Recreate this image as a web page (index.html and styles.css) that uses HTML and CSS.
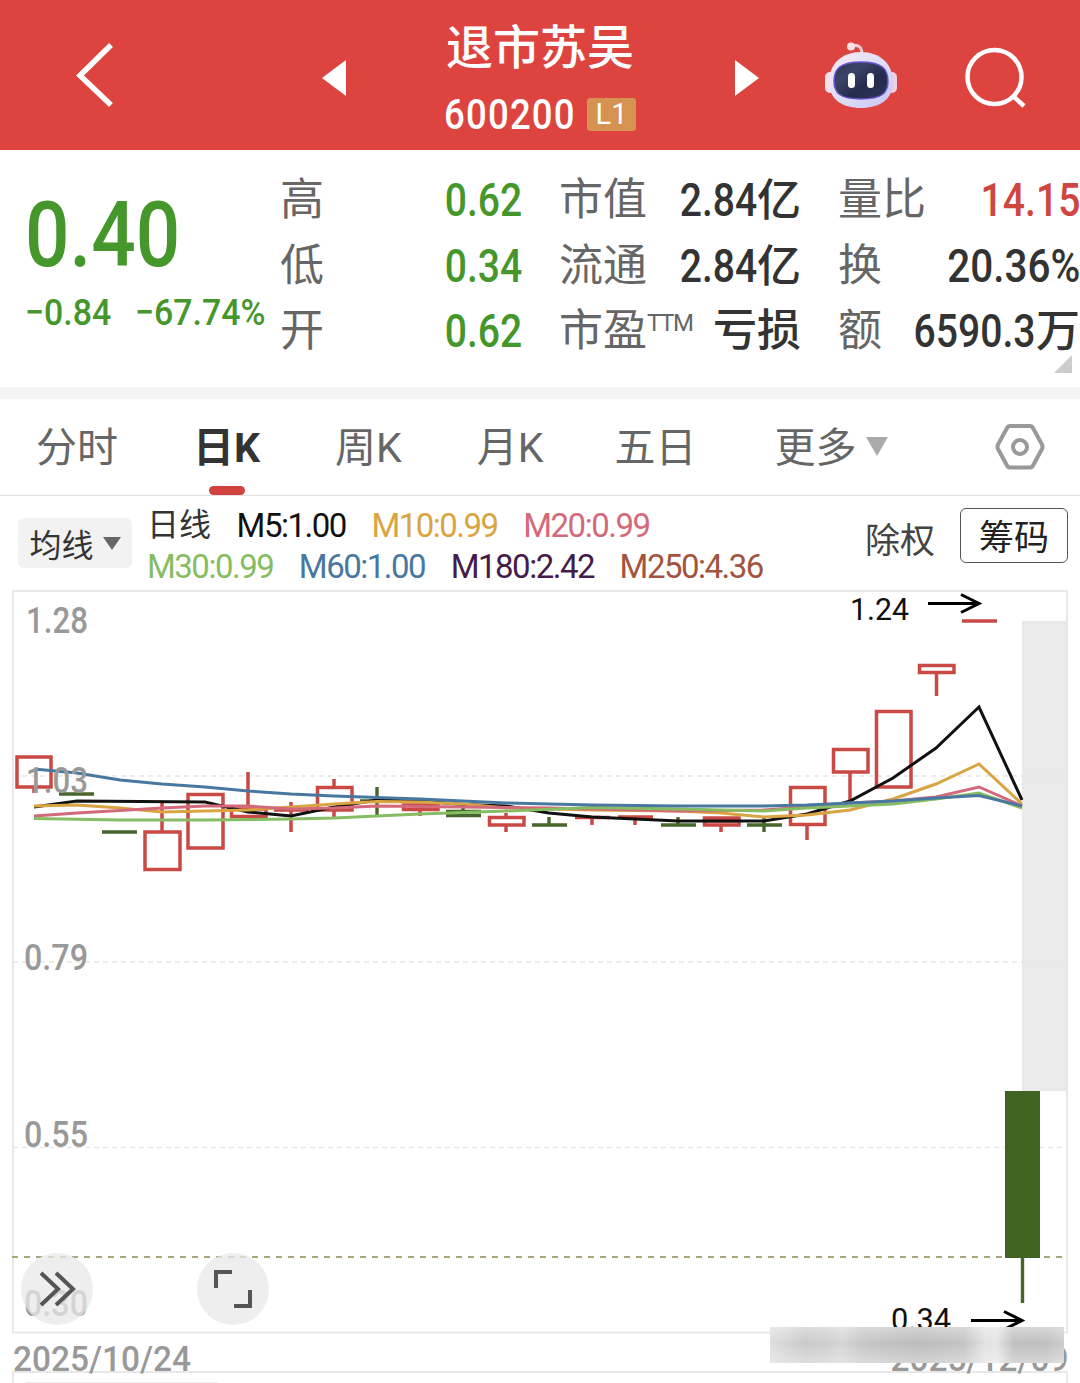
FILE: index.html
```
<!DOCTYPE html>
<html lang="zh-CN">
<head>
    <meta charset="UTF-8">
    <meta name="viewport" content="width=device-width, initial-scale=1.0">
    <title>退市苏吴 600200</title>
    <link rel="stylesheet" href="styles.css">
</head>
<body>
    <!-- Header -->
    <header class="header">
        <svg class="back" width="40" height="68" viewBox="75 41 40 68"><path d="M111 45L80 75.500L111 105" fill="none" stroke="#fff" stroke-width="5.500"/></svg>
        <svg class="prev" width="24" height="38" viewBox="0 0 24 38"><path d="M0 19L24 1V37Z" fill="#fff"/></svg>
        <div class="title">
            <h1>退市苏吴</h1>
            <div class="code"><span>600200</span><em>L1</em></div>
        </div>
        <svg class="next" width="24" height="38" viewBox="0 0 24 38"><path d="M24 19L0 1V37Z" fill="#fff"/></svg>
        <svg class="robot" width="76" height="70" viewBox="823 40 76 70">
            <defs>
                <linearGradient id="shell" x1="0" y1="0" x2="1" y2="1">
                    <stop offset="0" stop-color="#fbe9f0"/>
                    <stop offset="0.55" stop-color="#dcdcf8"/>
                    <stop offset="1" stop-color="#c9c4f2"/>
                </linearGradient>
                <linearGradient id="visor" x1="0" y1="0" x2="1" y2="1">
                    <stop offset="0" stop-color="#2c3356"/>
                    <stop offset="0.3" stop-color="#3b4566"/>
                    <stop offset="0.6" stop-color="#252b4c"/>
                    <stop offset="1" stop-color="#2c3458"/>
                </linearGradient>
            </defs>
            <path d="M852 46C858 44 862 47 862 54" fill="none" stroke="#f7cfd6" stroke-width="3"/>
            <circle cx="851" cy="46.500" r="4" fill="#fbe0e4"/>
            <rect x="825" y="72" width="10" height="21" rx="5" fill="#f6dfec"/>
            <rect x="887" y="72" width="10" height="21" rx="5" fill="#f0cfe4"/>
            <path d="M861 52C880 52 893 64 893 82C893 99 880 108 861 108C842 108 829 99 829 82C829 64 842 52 861 52Z" fill="url(#shell)"/>
            <path d="M861 62C882 62 888 69 888 81C888 93 882 99 861 99C840 99 834 93 834 81C834 69 840 62 861 62Z" fill="url(#visor)" stroke="#6a55cf" stroke-width="1.500"/>
            <rect x="848" y="73" width="7" height="15" rx="3.500" fill="#fff"/>
            <rect x="867" y="73" width="7" height="15" rx="3.500" fill="#fff"/>
        </svg>
        <svg class="search" width="64" height="64" viewBox="964 46 64 64"><circle cx="994.500" cy="77" r="27" fill="none" stroke="#fff" stroke-width="4.500"/><path d="M1013 96L1024 106" stroke="#fff" stroke-width="4.500"/></svg>
    </header>

    <!-- Quote -->
    <section class="quote">
        <div class="price">
            <div class="last">0.40</div>
            <div class="change"><span>−0.84</span><span>−67.74%</span></div>
        </div>
        <dl class="col col1">
            <div><dt>高</dt><dd class="green"><i>0.62</i></dd></div>
            <div><dt>低</dt><dd class="green"><i>0.34</i></dd></div>
            <div><dt>开</dt><dd class="green"><i>0.62</i></dd></div>
        </dl>
        <dl class="col col2">
            <div><dt>市值</dt><dd><i>2.84</i>亿</dd></div>
            <div><dt>流通</dt><dd><i>2.84</i>亿</dd></div>
            <div><dt>市盈<sup>TTM</sup></dt><dd>亏损</dd></div>
        </dl>
        <dl class="col col3">
            <div><dt>量比</dt><dd class="red"><i>14.15</i></dd></div>
            <div><dt>换</dt><dd><i class="wide">20.36%</i></dd></div>
            <div><dt>额</dt><dd><i>6590.3</i>万</dd></div>
        </dl>
        <span class="corner"></span>
    </section>

    <!-- Period tabs -->
    <nav class="tabs">
        <a>分时</a>
        <a class="active">日K</a>
        <a>周K</a>
        <a>月K</a>
        <a class="five">五日</a>
        <a class="more">更多<svg width="22" height="19" viewBox="0 0 22 19"><path d="M0 0H22L11 19Z" fill="#aaa"/></svg></a>
        <svg class="settings" width="50" height="48" viewBox="0 0 50 48">
            <path d="M15 3H35Q37 3 38 5L47 21.500Q48 24 47 26L38 42.500Q37 44.500 35 44.500H15Q13 44.500 12 42.500L3 26Q2 24 3 21.500L12 5Q13 3 15 3Z" fill="none" stroke="#999" stroke-width="4"/>
            <circle cx="25" cy="24" r="7" fill="none" stroke="#999" stroke-width="4"/>
        </svg>
    </nav>

    <!-- Moving averages -->
    <section class="averages">
        <button class="pick">均线<svg width="18" height="13" viewBox="0 0 18 13"><path d="M0 0H18L9 13Z" fill="#666"/></svg></button>
        <div class="legend">
            <div><b>日线</b><span class="m5">M5:1.00</span><span class="m10">M10:0.99</span><span class="m20">M20:0.99</span></div>
            <div><span class="m30">M30:0.99</span><span class="m60">M60:1.00</span><span class="m180">M180:2.42</span><span class="m250">M250:4.36</span></div>
        </div>
        <span class="rights">除权</span>
        <button class="chips">筹码</button>
    </section>

    <!-- Chart -->
    <section class="chart">
        <svg width="1080" height="744" viewBox="0 590 1080 744">
            <rect x="1022" y="621" width="45" height="470" fill="#eaeaea"/>
            <g class="grid">
                <path d="M13 776H1067M13 962H1067M13 1147.500H1067"/>
            </g>
            <rect class="frame" x="13" y="591" width="1054" height="741.500"/>
            <path class="now" d="M12 1257H1067"/>

            <g class="up">
                <path d="M17 757H51V787H17ZM34 787V793"/>
                <path d="M162 803V832M145 832H180V869.500H145Z"/>
                <path d="M188 794.500H223V848H188Z"/>
                <path d="M248 772V807M231.500 809H266V816.500H231.500Z"/>
                <path d="M291 802V832M274 810H309"/>
                <path d="M334 779V787M317.500 787.500H352V810H317.500ZM334 810V817"/>
                <path d="M403.500 805H438V809.500H403.500ZM420 810V816"/>
                <path d="M506 813V817M489.500 817.500H524V825H489.500ZM506 825V832"/>
                <path d="M575 817.500H610M592 817V825"/>
                <path d="M618 817H653M635 817V825"/>
                <path d="M704.500 818H739V825H704.500ZM704 821H739M721 825V832"/>
                <path d="M790.500 787.500H825V824.500H790.500ZM807 825V840"/>
                <path d="M833.500 749.500H868V772H833.500ZM850 772V801"/>
                <path d="M876.500 711.500H911V787H876.500Z"/>
                <path d="M919.500 665.500H954V672.500H919.500ZM936.500 673V696"/>
                <path d="M962 621H997"/>
            </g>
            <g class="down">
                <path d="M59 794H94M102 832H137"/>
                <path d="M377 787V815M360 801H395"/>
                <path d="M446 811.500H481M446 815.500H481M463 808V816"/>
                <path d="M532 825H567M549 817V825M661 825H696M678 817V825M747 825H782M764 818V832"/>
                <rect x="1005" y="1091" width="35" height="167" fill="#3f6422"/>
                <path d="M1022.500 1257V1303"/>
            </g>

            <g class="lines">
                <polyline class="m5" points="34,807 77,801 205,802 248,812 291,816 334,807 377,800 420,801 463,804.500 506,806 549,813 592,817 635,819 678,821 764,821 807,814 850,801 893,778 936,748 979,707 1022,800"/>
                <polyline class="m10" points="34,806 77,805 120,808 162,812 205,811 248,810 291,807 334,804 377,801.500 420,802 463,804 506,808 592,810 678,811 721,813 764,817 807,815 850,810 893,799 936,784 979,764 1022,804"/>
                <polyline class="m20" points="34,816 77,813 120,810.500 162,808 205,806 248,806 291,809 334,808 377,806 463,807 549,808 635,810 678,811 764,810 807,807 850,803 893,801 936,797 979,787 1022,806"/>
                <polyline class="m30" points="34,818.500 120,820 205,820 291,819 334,818 420,814 506,811 592,807.500 678,809 764,811 807,808 850,806 893,804 936,799 979,793 1022,808"/>
                <polyline class="m60" points="34,769 77,773 120,780 162,784 205,787 248,791 291,794 334,796 420,799 506,803 592,805 678,806 764,806 807,805 850,803 893,801 936,798 979,795.500 1022,806"/>
            </g>

            <text class="axis" x="26" y="633" textLength="62" lengthAdjust="spacingAndGlyphs">1.28</text>
            <text class="axis" x="26" y="793" textLength="62" lengthAdjust="spacingAndGlyphs">1.03</text>
            <text class="axis" x="24" y="970" textLength="64" lengthAdjust="spacingAndGlyphs">0.79</text>
            <text class="axis" x="24" y="1147" textLength="64" lengthAdjust="spacingAndGlyphs">0.55</text>
            <text class="axis" x="24" y="1316" textLength="64" lengthAdjust="spacingAndGlyphs">0.30</text>

            <text class="mark" x="850" y="620" textLength="59" lengthAdjust="spacingAndGlyphs">1.24</text>
            <path class="arrow" d="M928 603.500H979M961 594.500L979 603.500L961 612.500"/>
            <text class="mark" x="891" y="1330" textLength="60" lengthAdjust="spacingAndGlyphs">0.34</text>
            <path class="arrow" d="M971 1320.500H1022M1004 1311.500L1022 1320.500L1004 1329.500"/>
        </svg>
        <button class="round expand"><svg width="36" height="36" viewBox="0 0 36 36"><path d="M2 2L19 18L2 34M17 2L34 18L17 34"/></svg></button>
        <button class="round full"><svg width="38" height="38" viewBox="0 0 38 38"><path d="M2 18V2H18M20 36H36V20"/></svg></button>
        <div class="blurred"></div>
    </section>

    <div class="dates"><span>2025/10/24</span><span>2025/12/09</span></div>
    <section class="volume"><div></div></section>
</body>
</html>
```
FILE: styles.css
```
* {
    box-sizing: border-box;
}
body {
    margin: 0;
    width: 1080px;
    height: 1383px;
    overflow: hidden;
    background: #fff;
    color: #333;
    font-family: Roboto, "Noto Sans CJK SC", sans-serif;
}
svg {
    display: block;
    flex-shrink: 0;
    overflow: visible;
}
button {
    font-family: inherit;
    padding: 0;
    border: 0;
}

/* header */
.header {
    display: flex;
    align-items: center;
    height: 150px;
    background: #dd4440;
    color: #fff;
}
.back { margin-left: 75px; }
.prev { margin: 5px 0 0 207px; }
.title {
    width: 240px;
    margin: 0 75px 0 74px;
    height: 150px;
    padding-top: 18px;
    text-align: center;
}
.title h1 {
    margin: 0;
    font-size: 47px;
    line-height: 60px;
    font-weight: 500;
}
.code {
    display: flex;
    justify-content: center;
    align-items: center;
    gap: 12px;
    height: 72px;
}
.code span {
    width: 131px;
    font-size: 43px;
    font-weight: 500;
    letter-spacing: 1.4px;
    transform: scaleX(0.85);
    transform-origin: left;
}
.code em {
    width: 49px;
    height: 33px;
    border-radius: 3px;
    background: #d69250;
    font-size: 29px;
    line-height: 33px;
    font-style: normal;
}
.next { margin-top: 5px; }
.robot { margin-left: 64px; }
.search { margin: 6px 0 0 65px; }

/* quote */
.quote {
    position: relative;
    display: flex;
    height: 249px;
    padding-top: 17px;
    border-bottom: 12px solid #f4f4f4;
}
.price {
    width: 280px;
    padding-left: 25px;
    color: #45962b;
    font-weight: 500;
}
.last {
    margin-top: 15px;
    font-size: 90px;
    line-height: 108px;
    transform: scaleX(0.87);
    transform-origin: left;
}
.change {
    display: flex;
    white-space: nowrap;
    font-size: 37px;
    line-height: 46px;
}
.change span {
    width: 110px;
    transform: scaleX(0.915);
    transform-origin: left;
}
.col {
    margin: 0;
    font-size: 44px;
}
.col div {
    display: flex;
    justify-content: space-between;
    height: 65.5px;
    line-height: 66.5px;
    white-space: nowrap;
}
.col1 { width: 242px; }
.col2 { width: 242px; margin-left: 37px; }
.col3 { width: 242px; margin-left: 37px; }
dt {
    color: #666;
}
dt sup {
    font-size: 24px;
    line-height: 0;
    vertical-align: 15px;
    letter-spacing: -1.4px;
}
dd {
    margin: 0;
    font-weight: 500;
}
dd i {
    display: inline-block;
    font-size: 46px;
    font-style: normal;
    transform: scaleX(0.85);
    transform-origin: right;
}
dd .wide { transform: scaleX(0.88); }
.green { color: #45962b; }
.red { color: #cf4641; }
.corner {
    position: absolute;
    right: 8px;
    bottom: 14px;
    border-left: 18px solid transparent;
    border-bottom: 18px solid #ccc;
}

/* tabs */
.tabs {
    display: flex;
    align-items: center;
    gap: 75px;
    height: 97px;
    padding-left: 36px;
    border-bottom: 1px solid #e0e0e0;
    font-size: 41px;
    color: #666;
}
.tabs a {
    margin-top: -6px;
}
.tabs .active {
    position: relative;
    color: #333;
    font-weight: 700;
}
.active::after {
    content: "";
    position: absolute;
    left: 16px;
    bottom: -21px;
    width: 36px;
    height: 9px;
    border-radius: 5px;
    background: #d0433f;
}
.tabs .five {
    margin-left: -4px;
}
.more {
    display: flex;
    align-items: center;
    gap: 9px;
    margin-left: 3px;
}
.more svg { margin-top: 5px; }
.settings { margin-left: 32px; }

/* averages */
.averages {
    display: flex;
    height: 94px;
    padding: 12px 12px 0 18px;
}
.pick {
    display: flex;
    align-items: center;
    justify-content: center;
    gap: 9px;
    width: 114px;
    height: 50px;
    margin-top: 10px;
    border-radius: 6px;
    background: #f2f2f2;
    color: #333;
    font-size: 32px;
}
.legend {
    width: 718px;
    margin: -3px 0 0 15px;
    font-size: 33px;
    letter-spacing: -1.5px;
}
.legend div {
    display: flex;
    gap: 25.6px;
    height: 41px;
    line-height: 41px;
}
.legend b {
    font-size: 32px;
    font-weight: 400;
    letter-spacing: 0;
}
.m5 { color: #111; stroke: #111; }
.m10 { color: #d9a441; stroke: #d9a441; }
.m20 { color: #d3697a; stroke: #d3697a; }
.m30 { color: #87bd62; stroke: #87bd62; }
.m60 { color: #4878a0; stroke: #4878a0; }
.m180 { color: #441c4c; }
.m250 { color: #a2543f; }
.rights {
    width: 95px;
    margin-top: 9px;
    font-size: 35px;
    line-height: 50px;
    color: #444;
}
.chips {
    width: 108px;
    height: 55px;
    padding-top: 5px;
    border: 1.5px solid #555;
    border-radius: 6px;
    background: #fff;
    color: #222;
    font-size: 35px;
    line-height: 50px;
}

/* chart */
.chart {
    position: relative;
    height: 744px;
}
.frame {
    fill: none;
    stroke: #e8e8e8;
    stroke-width: 2;
}
.grid path {
    stroke: #e6e6e6;
    stroke-width: 1.5;
    stroke-dasharray: 5 4;
}
.now {
    stroke: #aaa67c;
    stroke-width: 2;
    stroke-dasharray: 6 6;
}
.up path {
    fill: none;
    stroke: #c94a44;
    stroke-width: 3.5;
}
.down path {
    fill: none;
    stroke: #47662b;
    stroke-width: 3.4;
}
.lines polyline {
    fill: none;
    stroke-width: 3;
}
.axis {
    fill: #999;
    font-size: 36px;
    font-weight: 500;
}
.mark {
    fill: #111;
    font-size: 32px;
}
.arrow {
    fill: none;
    stroke: #000;
    stroke-width: 3;
}
.round {
    position: absolute;
    top: 663px;
    display: flex;
    align-items: center;
    justify-content: center;
    width: 72px;
    height: 72px;
    border-radius: 50%;
    background: rgba(232, 232, 232, 0.75);
}
.round path {
    fill: none;
    stroke: #555;
    stroke-width: 4;
}
.expand { left: 21px; }
.full { left: 197px; }
.blurred {
    position: absolute;
    left: 770px;
    top: 737px;
    z-index: 1;
    width: 294px;
    height: 36px;
    background:
        linear-gradient(rgba(255, 255, 255, 0.35), rgba(255, 255, 255, 0) 45%, rgba(255, 255, 255, 0.35)),
        linear-gradient(90deg, #dedede, #cacaca 12%, #cfcfcf 20%, #d6d6d6 24%, #c6c6c6 32%, #bcbcbc 50%, #c4c4c4 66%, #e2e2e2 73%, #e4e4e4 77%, #c0c0c0 83%, #c0c0c0 94%, #cdcdcd);
}

/* bottom */
.dates {
    display: flex;
    justify-content: space-between;
    height: 37px;
    padding: 0 12px 0 13px;
    color: #999;
    font-size: 35px;
    font-weight: 500;
    line-height: 51px;
}
.dates span {
    transform: scaleX(0.955);
    transform-origin: left;
}
.dates span:last-child { transform-origin: right; }
.volume {
    width: 1056px;
    height: 20px;
    margin-left: 12px;
    border: 2px solid #e8e8e8;
}
.volume div {
    width: 192px;
    height: 2px;
    margin: 9px 0 0 11px;
    background: #eee;
}
```
